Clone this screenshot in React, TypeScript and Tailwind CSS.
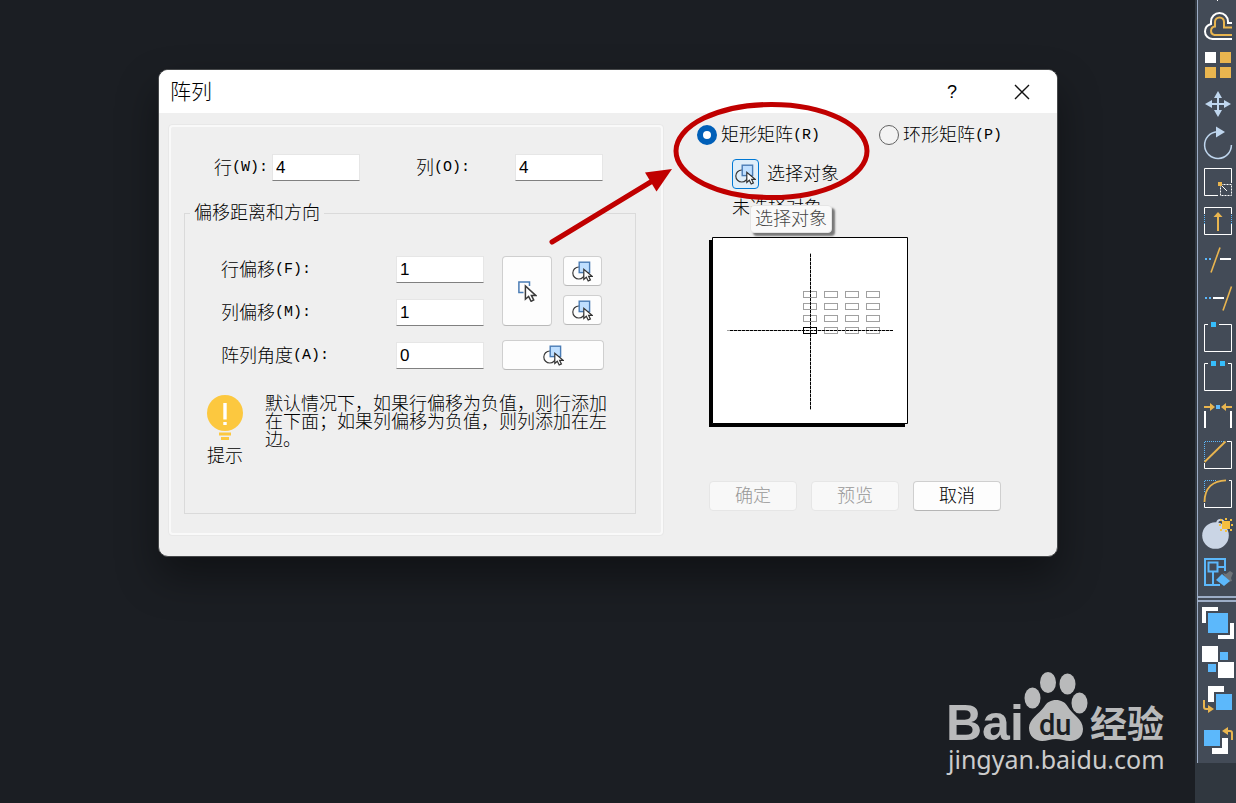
import React, { useState } from "react";

const cjk = "font-['Liberation_Sans','Noto_Sans_CJK_SC',sans-serif]";

function Latin({ children }: { children: React.ReactNode }) {
  return <span className="font-['Liberation_Mono',monospace] text-[15px] leading-none font-normal">{children}</span>;
}

function SelectObjectsIcon() {
  return (
    <svg width="21" height="21" viewBox="0 0 21 21" fill="none" aria-hidden="true">
      <circle cx="6.8" cy="12" r="6" stroke="#3a3a3a" strokeWidth="1.2" />
      <rect x="7.2" y="1.2" width="10.4" height="10.4" fill="#bfdfff" stroke="#4a7cb5" strokeWidth="1.4" />
      <path d="M11.8 8.2v10.2l2.5-2.1 1.9 3.7 2.2-1.1-1.8-3.6h3.5z" fill="#fff" stroke="#333" strokeWidth="1.2" />
    </svg>
  );
}

function PickPointIcon() {
  return (
    <svg width="19" height="21" viewBox="0 0 19 21" fill="none" aria-hidden="true">
      <path d="M5.5 11.6H.9V.9h10.6V5" stroke="#4a7cb5" strokeWidth="1.5" />
      <path d="M7.4 5v13.2l3.2-2.7 2.5 4.8 2.6-1.3-2.3-4.6h4.3z" fill="#fff" stroke="#3a3a3a" strokeWidth="1.5" />
    </svg>
  );
}

function Frame({ gap }: { gap: number }) {
  return <path d={`M10 5.5H6.5v27h27v-27H${gap}`} stroke="#fff" />;
}

const gold = "#e9b54f";
const blue = "#5cb8fb";
const pale = "#bfd6ee";

const editTools: { name: string; art: React.ReactNode }[] = [
  {
    name: "偏移",
    art: (
      <>
        <path d="M34 16h-4v-1.500a8.500 8.500 0 0 0-17 0V17A8 8 0 0 0 7 24.500 7.500 7.500 0 0 0 14.500 32H34" stroke="#fff" strokeWidth="2" />
        <path d="M34 20.500h-8V15a4.500 4.500 0 0 0-9 0v4.500A4.300 4.300 0 0 0 16.500 28H34" stroke={gold} strokeWidth="2" />
      </>
    ),
  },
  {
    name: "阵列",
    art: (
      <>
        <path d="M7 6h11v11H7z" fill="#fff" />
        <path d="M22 6h11v11H22zM7 21h11v11H7zM22 21h11v11H22z" fill={gold} />
      </>
    ),
  },
  {
    name: "移动",
    art: (
      <>
        <path d="M20 9v20M10 19h20" stroke={pale} strokeWidth="2" />
        <path d="M20 6l4 7h-8zM20 32l4-7h-8zM7 19l7-4v8zM33 19l-7-4v8z" fill={pale} />
      </>
    ),
  },
  {
    name: "旋转",
    art: (
      <>
        <path d="M33.400 21A13.400 13.400 0 1 1 19 7.700" stroke={pale} strokeWidth="1.500" />
        <path d="M18 2.500l9 5.500-9 5.500z" fill={pale} />
      </>
    ),
  },
  {
    name: "缩放",
    art: (
      <>
        <path d="M20 32.500H6.500v-27h27V20" stroke="#fff" />
        <path d="M22.500 21.500h11v11h-11z" stroke="#fff" strokeDasharray="2 1" />
        <path d="M24 23l5 5" stroke="#fff" />
        <path d="M20 19h4v4h-4z" fill={gold} />
      </>
    ),
  },
  {
    name: "拉伸",
    art: (
      <>
        <path d="M6.500 12V5.500h27V12M6.500 22v10.500h27V22" stroke="#fff" />
        <path d="M6.500 13v9M33.500 13v9" stroke={blue} strokeDasharray="1 1" />
        <path d="M20 29V14" stroke={gold} strokeWidth="2" />
        <path d="M20 10l4.500 5h-9z" fill={gold} />
      </>
    ),
  },
  {
    name: "修剪",
    art: (
      <>
        <path d="M7 17h2v2H7zM11 17h2v2h-2z" fill={blue} />
        <path d="M13 31.500l9-25" stroke={gold} strokeWidth="1.600" />
        <path d="M22 17h11v2H22z" fill="#fff" />
      </>
    ),
  },
  {
    name: "延伸",
    art: (
      <>
        <path d="M7 17h2v2H7zM11 17h2v2h-2z" fill={blue} />
        <path d="M15 17h11v2H15z" fill="#fff" />
        <path d="M25 30.500l8.500-24" stroke={gold} strokeWidth="1.600" />
      </>
    ),
  },
  {
    name: "打断于点",
    art: (
      <>
        <Frame gap={21} />
        <path d="M13 3h5v5h-5z" fill="#36bdfb" />
      </>
    ),
  },
  {
    name: "打断",
    art: (
      <>
        <Frame gap={30} />
        <path d="M13 3h5v5h-5zM22 3h5v5h-5z" fill="#36bdfb" />
      </>
    ),
  },
  {
    name: "合并",
    art: (
      <>
        <path d="M6 9h6V6l5 4-5 4v-3H6zM34 9h-6V6l-5 4 5 4v-3h6z" fill={gold} />
        <path d="M18 8h4v4h-4z" fill={blue} />
        <path d="M6 14h2v17H6zM32 14h2v17h-2z" fill="#fff" />
      </>
    ),
  },
  {
    name: "倒角",
    art: (
      <>
        <path d="M6.500 27v5.500h27v-27H29" stroke="#fff" />
        <path d="M6.500 25V5.500H27" stroke={blue} strokeDasharray="1 1" />
        <path d="M6.500 26L27.500 5.500" stroke={gold} strokeWidth="1.800" />
      </>
    ),
  },
  {
    name: "圆角",
    art: (
      <>
        <path d="M6.500 28v4.500h27v-27H31" stroke="#fff" />
        <path d="M6.500 17V5.500H18" stroke={blue} strokeDasharray="1 1" />
        <path d="M6.500 27C6.500 13 15 5.500 28 5.300" stroke={gold} strokeWidth="1.800" />
      </>
    ),
  },
  {
    name: "分解",
    art: (
      <>
        <circle cx="17.500" cy="21.500" r="13.300" fill="#cad5e5" />
        <path d="M19 9c1-4 5-4 7-1" stroke="#cad5e5" strokeWidth="2" />
        <path d="M24 7h8v8h-8z" fill="#f6bf3f" />
        <path
          d="M27 4h2v2h-2zM27 16h2v2h-2zM21 10h2v2h-2zM33 10h2v2h-2zM22 5h2v2h-2zM32 5h2v2h-2zM22 15h2v2h-2zM32 15h2v2h-2z"
          fill="#f6bf3f"
        />
      </>
    ),
  },
  {
    name: "编辑块",
    art: (
      <>
        <path d="M27 18V6H7v26h15M15 19v13M20 14h7" stroke={blue} strokeWidth="2" />
        <path d="M10.500 9.500h9v9h-9z" fill="#434b57" stroke={blue} strokeWidth="2" />
        <path d="M25 20l3 1 4-3 3 2-2 5 1 3-4 1z" fill="#6e7378" />
        <path d="M24 21l8 7-6 5-8-6z" fill={blue} />
      </>
    ),
  },
];

const orderTools: { name: string; art: React.ReactNode }[] = [
  {
    name: "前置",
    art: (
      <>
        <path d="M4 4h16v4H8v12H4zM36 20v16H20v-4h12V20z" fill="#fff" />
        <path d="M10 10h20v20H10z" fill={blue} />
      </>
    ),
  },
  {
    name: "后置",
    art: (
      <>
        <path d="M22 10h8v8h-8zM10 22h8v8h-8z" fill={blue} />
        <path d="M4 4h16v16H4zM20 20h16v16H20z" fill="#fff" />
      </>
    ),
  },
  {
    name: "置于对象之上",
    art: (
      <>
        <path d="M10 5h16v6H16v10h-6z" fill="#fff" />
        <path d="M18 13h16v16H18z" fill={blue} />
        <path d="M6 19v7a2 2 0 0 0 2 2h3" stroke={gold} strokeWidth="2" />
        <path d="M10 24l6 4-6 4z" fill={gold} />
      </>
    ),
  },
  {
    name: "置于对象之下",
    art: (
      <>
        <path d="M24 18h6v16H14v-6h10z" fill="#fff" />
        <path d="M6 10h16v16H6z" fill={blue} />
        <path d="M34 20v-7a2 2 0 0 0-2-2h-3" stroke={gold} strokeWidth="2" />
        <path d="M30 7l-6 4 6 4z" fill={gold} />
      </>
    ),
  },
];

function ToolGroup({ tools }: { tools: { name: string; art: React.ReactNode }[] }) {
  return (
    <>
      {tools.map((t) => (
        <button key={t.name} type="button" aria-label={t.name} className="block h-[39px] w-[38px]">
          <svg width="38" height="39" viewBox="0 0 38 39" fill="none" aria-hidden="true">
            {t.art}
          </svg>
        </button>
      ))}
    </>
  );
}

const fieldClass =
  "h-[27px] w-[88px] border border-[#e6e6e6] border-b-[#808080] bg-white px-[3px] text-[17px] leading-6 font-normal text-black outline-none";
const pickClass = "flex items-center justify-center rounded border border-[#cfcfcf] border-b-[#b9b9b9] bg-[#fdfdfd]";

function OffsetField({ id, label, hotkey, initial }: { id: string; label: string; hotkey: string; initial: string }) {
  const [value, setValue] = useState(initial);
  return (
    <div className="flex items-center">
      <label htmlFor={id} className="flex w-[175px] items-center leading-6">
        {label}
        <Latin>{hotkey}</Latin>
      </label>
      <input id={id} className={fieldClass} value={value} onChange={(e) => setValue(e.target.value)} />
    </div>
  );
}

function ArrayPreview() {
  const cells: { x: number; y: number }[] = [];
  for (let r = 0; r < 4; r++) for (let c = 0; c < 4; c++) cells.push({ x: 91.5 + c * 21, y: 54.5 + r * 12 });
  return (
    <svg width="199" height="190" viewBox="-3 0 199 190" fill="none" role="img" aria-label="阵列预览">
      <path d="M-3 3h196v187H-3z" fill="#000" />
      <path d="M.5.5h195v186H.5z" fill="#fff" stroke="#000" />
      {cells.map((p) => (
        <rect key={`${p.x}-${p.y}`} x={p.x} y={p.y} width="13" height="6" stroke="#a0a0a0" />
      ))}
      <path d="M98.500 16v157M15 93.500h166" stroke="#a0a0a0" />
      <path d="M98.500 17v156M18 93.500h163" stroke="#000" strokeDasharray="3 1" />
      <rect x="91.500" y="90.500" width="13" height="6" stroke="#000" />
    </svg>
  );
}

function RadioOption({
  id,
  label,
  hotkey,
  checked,
  onSelect,
}: {
  id: string;
  label: string;
  hotkey: string;
  checked: boolean;
  onSelect: () => void;
}) {
  return (
    <div className="flex h-5 w-[182px] shrink-0 items-center gap-1">
      <input
        type="radio"
        name="array-kind"
        id={id}
        checked={checked}
        onChange={onSelect}
        className="size-5 shrink-0 appearance-none rounded-full border border-[#626262] bg-[#f3f3f3] checked:border-[6px] checked:border-[#005fb8] checked:bg-white"
      />
      <label htmlFor={id} className="flex items-center leading-5 whitespace-nowrap">
        {label}
        <Latin>{hotkey}</Latin>
      </label>
    </div>
  );
}

function ArrayDialog() {
  const [kind, setKind] = useState("rect");
  const [rows, setRows] = useState("4");
  const [cols, setCols] = useState("4");
  return (
    <section
      role="dialog"
      aria-label="阵列"
      className={`overflow-hidden rounded-[10px] border border-[#46484a] bg-[#efefef] text-[18px] font-light text-black shadow-[0_20px_40px_rgba(0,0,0,0.4)] ${cjk}`}
    >
      <header className="flex h-[43px] items-center bg-white pl-[11px]">
        <h1 className="flex-1 text-[21px] leading-8 font-light">阵列</h1>
        <button type="button" aria-label="帮助" className="w-[70px] text-center text-[18px] leading-8 font-normal">
          ?
        </button>
        <button type="button" aria-label="关闭" className="flex w-[70px] justify-center">
          <svg width="16" height="16" viewBox="0 0 16 16" stroke="#111" strokeWidth="1.400" aria-hidden="true">
            <path d="M1 1l14 14M15 1L1 15" />
          </svg>
        </button>
      </header>

      <div className="flex items-start pt-[11px] pb-5 pl-[9px]">
        <div className="flex-1 rounded border border-[#e8e8e8]">
          <div className="rounded-sm border-2 border-[#f9f9f9] pt-[27px] pr-[25px] pb-[19px] pl-[13px]">
            <div className="flex items-center pl-[30px]">
              <label htmlFor="rows" className="flex w-[58px] items-center leading-6">
                行<Latin>(W):</Latin>
              </label>
              <input id="rows" className={fieldClass} value={rows} onChange={(e) => setRows(e.target.value)} />
              <label htmlFor="cols" className="ml-14 flex w-[99px] items-center leading-6">
                列<Latin>(O):</Latin>
              </label>
              <input id="cols" className={fieldClass} value={cols} onChange={(e) => setCols(e.target.value)} />
            </div>

            <fieldset className="mt-5 border border-[#dadada] pb-12">
              <legend className="ml-[5px] px-1 leading-6">偏移距离和方向</legend>
              <div className="flex gap-[18px] pt-[31px] pl-9">
                <div className="flex flex-col gap-4">
                  <OffsetField id="row-offset" label="行偏移" hotkey="(F):" initial="1" />
                  <OffsetField id="col-offset" label="列偏移" hotkey="(M):" initial="1" />
                  <OffsetField id="angle" label="阵列角度" hotkey="(A):" initial="0" />
                </div>
                <div className="flex w-[102px] flex-col gap-[14px]">
                  <div className="flex gap-[11px]">
                    <button type="button" aria-label="拾取两个偏移" className={`h-[70px] w-[50px] ${pickClass}`}>
                      <PickPointIcon />
                    </button>
                    <div className="flex flex-col gap-[9px]">
                      <button type="button" aria-label="拾取行偏移" className={`h-[30px] w-[39px] ${pickClass}`}>
                        <SelectObjectsIcon />
                      </button>
                      <button type="button" aria-label="拾取列偏移" className={`h-[30px] w-[39px] ${pickClass}`}>
                        <SelectObjectsIcon />
                      </button>
                    </div>
                  </div>
                  <button type="button" aria-label="拾取阵列角度" className={`h-[30px] w-full ${pickClass}`}>
                    <SelectObjectsIcon />
                  </button>
                </div>
              </div>

              <div className="mt-[25px] flex gap-[22px] pl-[22px]">
                <div className="flex w-9 flex-col gap-1.5">
                  <svg width="36" height="46" viewBox="0 0 36 46" aria-hidden="true">
                    <circle cx="18" cy="18" r="18" fill="#fcc83f" />
                    <path d="M12 37.500h12v3H12zM14 42h8v3h-8z" fill="#fcc83f" />
                    <path d="M16.300 8h3.400v16.500h-3.400zM16.300 27h3.400v3h-3.400z" fill="#fff" />
                  </svg>
                  <span className="leading-[18px] whitespace-nowrap">提示</span>
                </div>
                <p className="w-[342px] leading-[18px]">
                  默认情况下，如果行偏移为负值，则行添加在下面；如果列偏移为负值，则列添加在左边。
                </p>
              </div>
            </fieldset>
          </div>
        </div>

        <div className="relative w-[393px] pt-px pl-[33px]">
          <div className="flex">
            <RadioOption id="rect" label="矩形矩阵" hotkey="(R)" checked={kind === "rect"} onSelect={() => setKind("rect")} />
            <RadioOption id="polar" label="环形矩阵" hotkey="(P)" checked={kind === "polar"} onSelect={() => setKind("polar")} />
          </div>
          <div className="mt-[14px] flex items-center gap-2 pl-[35px]">
            <button
              type="button"
              id="select-objects"
              aria-label="选择对象"
              className="flex h-[30px] w-[27px] items-center justify-center rounded border border-[#0078d4] bg-[#e0eef9]"
            >
              <SelectObjectsIcon />
            </button>
            <label htmlFor="select-objects" className="leading-6">
              选择对象
            </label>
          </div>
          <div className="relative mt-[10px] pl-[35px]">
            <p className="leading-[18px]">未选择对象</p>
            <span
              role="tooltip"
              className="absolute top-[6px] left-[53px] z-10 rounded border border-[#e5e5e5] bg-[#f9f9f9] px-1 text-[18px] leading-[26px] text-[#454545] shadow-[3px_3px_2px_rgba(0,0,0,0.5)]"
            >
              选择对象
            </span>
          </div>
          <div className="mt-5 pl-3">
            <ArrayPreview />
          </div>
          <div className="mt-[54px] flex gap-[14px] pl-3">
            <button type="button" disabled className="h-[30px] w-[88px] rounded border border-[#e6e6e6] bg-[#f8f8f8] text-[#979797]">
              确定
            </button>
            <button type="button" disabled className="h-[30px] w-[88px] rounded border border-[#e6e6e6] bg-[#f8f8f8] text-[#979797]">
              预览
            </button>
            <button type="button" className="h-[30px] w-[88px] rounded border border-[#cfcfcf] border-b-[#b5b5b5] bg-[#fdfdfd]">
              取消
            </button>
          </div>

          <svg
            width="325"
            height="146"
            viewBox="0 0 325 146"
            fill="none"
            aria-hidden="true"
            className="pointer-events-none absolute -top-6 left-[-116px]"
          >
            <ellipse cx="223.500" cy="51" rx="95.500" ry="46.500" stroke="#c00000" strokeWidth="5" />
            <path d="M4 142L106 80" stroke="#c00000" strokeWidth="5" strokeLinecap="round" />
            <path d="M124 69L97 72.500l11.500 19z" fill="#c00000" />
          </svg>
        </div>
      </div>
    </section>
  );
}

function Watermark() {
  return (
    <div className="mt-auto flex w-[220px] flex-col self-end">
      <svg
        width="220"
        height="72"
        viewBox="0 0 220 72"
        fill="#b9babb"
        role="img"
        aria-label="Bai du 经验"
        className="overflow-visible"
      >
        <text x="-2" y="70" fontFamily="'Liberation Sans', sans-serif" fontWeight="700" fontSize="50">
          Bai
        </text>
        <ellipse cx="84.500" cy="28" rx="8" ry="10.500" />
        <ellipse cx="100" cy="12.500" rx="8" ry="10.500" />
        <ellipse cx="119.500" cy="14" rx="8" ry="10.500" />
        <ellipse cx="131.500" cy="33" rx="8" ry="10.500" />
        <path d="M108 30c5 0 9 2 12 7 4 7 15 12 15 22 0 8-6 12-13 12-5 0-9-2-14-2s-9 2-14 2c-7 0-13-5-13-13 0-9 10-14 15-21 3-5 7-7 12-7z" />
        <text x="91" y="65" fontFamily="Roboto, sans-serif" fontWeight="500" fontSize="29" fill="#1b1e23">
          du
        </text>
        <text x="142" y="68" fontFamily="'Noto Sans CJK SC', sans-serif" fontWeight="700" fontSize="37">
          经验
        </text>
      </svg>
      <span className="font-['Noto_Sans',sans-serif] text-[25px] leading-[34px] whitespace-nowrap text-[#cccccc]">
        jingyan.baidu.com
      </span>
    </div>
  );
}

export default function App() {
  return (
    <div className="flex min-h-screen bg-[#1b1e23]">
      <main className="flex min-w-0 flex-1 flex-col pt-[69px] pb-[27px]">
        <div className="pr-[137px] pl-[158px]">
          <ArrayDialog />
        </div>
        <div className="mt-auto flex flex-col pr-[27px]">
          <Watermark />
        </div>
      </main>
      <aside aria-label="修改工具" className="w-[41px] shrink-0 bg-[#30373f] pl-0.5">
        <div className="border-l border-[#9dadc6] bg-[#434b57]">
          <div className="flex h-[7px] justify-center">
            <span className="h-px w-px bg-white" />
          </div>
          <ToolGroup tools={editTools} />
          <div className="mt-1 mb-px flex flex-col gap-0.5">
            <div className="h-0.5 bg-[#9dadc6]" />
            <div className="h-0.5 bg-[#9dadc6]" />
          </div>
          <ToolGroup tools={orderTools} />
          <div className="h-1" />
        </div>
      </aside>
    </div>
  );
}
